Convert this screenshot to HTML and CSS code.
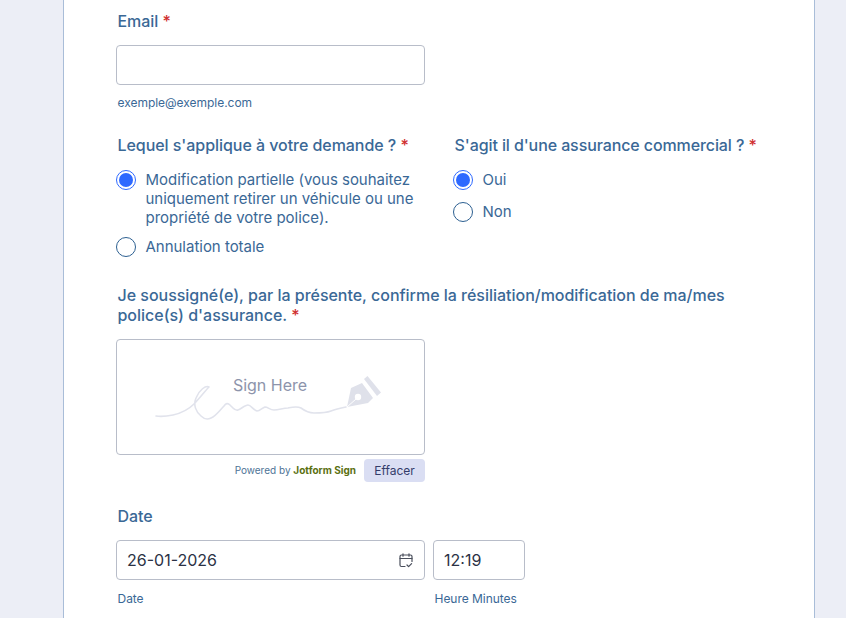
FILE: index.html
```html
<!DOCTYPE html>
<html lang="fr">
<head>
<meta charset="utf-8">
<title>Formulaire</title>
<link rel="stylesheet" href="styles.css">
</head>
<body>
<main class="card">
  <section class="field email">
    <div class="label">Email <span class="req">*</span></div>
    <div class="input wide"></div>
    <div class="sub">exemple@exemple.com</div>
  </section>
  <section class="columns">
    <div class="col col-left">
      <div class="label">Lequel s'applique à votre demande ? <span class="req">*</span></div>
      <div class="radio-list">
        <div class="radio-row">
          <span class="radio on"></span>
          <span class="radio-text">Modification partielle (vous souhaitez uniquement retirer un véhicule ou une propriété de votre police).</span>
        </div>
        <div class="radio-row">
          <span class="radio"></span>
          <span class="radio-text">Annulation totale</span>
        </div>
      </div>
    </div>
    <div class="col col-right">
      <div class="label narrow">S'agit il d'une assurance commercial ? <span class="req">*</span></div>
      <div class="radio-list tight">
        <div class="radio-row">
          <span class="radio on"></span>
          <span class="radio-text">Oui</span>
        </div>
        <div class="radio-row">
          <span class="radio"></span>
          <span class="radio-text">Non</span>
        </div>
      </div>
    </div>
  </section>
  <section class="field sign">
    <div class="label long">Je soussigné(e), par la présente, confirme la résiliation/modification de ma/mes police(s) d'assurance. <span class="req">*</span></div>
    <div class="sign-box">
      <span class="sign-here">Sign Here</span>
      <svg class="sign-art" width="235" height="55" viewBox="150 370 235 55" fill="none">
        <path d="M156 416 C163 417 168 416 173 415 C182 413 188 410 194 404 C200 398 205 391 209 387 C206 385 199 390 196 398 C193 405 196 412 201 416 C204 419 207 420 211 418 C216 416 220 410 224 406 C226 403 228 403 230 405 C233 408 235 411 238 410 C241 409 245 405 248 405 C251 405 253 410 257 411 C260 411 262 408 265 407 C268 407 270 410 274 410 C279 410 283 408 288 408 C293 407 297 406 301 408 C305 411 309 413 314 413 C320 413 326 413 331 411 C336 409 341 408 346 407" stroke="#e1e3ec" stroke-width="1.6" stroke-linecap="round" stroke-linejoin="round"/>
        <path d="M347 407 L351 388 L362 383 L373 398 L368 403 Z" fill="#dfe1ea"/>
        <path d="M364 379 L367.5 376 L381 392.5 L377 396 Z" fill="#dfe1ea"/>
        <circle cx="358" cy="397" r="3.2" fill="#fff"/>
        <path d="M347 407 L356 399" stroke="#fff" stroke-width="1"/>
      </svg>
    </div>
    <div class="sign-foot">
      <span class="powered">Powered by <b class="brand">Jotform Sign</b></span>
      <button class="clear" type="button">Effacer</button>
    </div>
  </section>
  <section class="field date">
    <div class="label">Date</div>
    <div class="date-row">
      <div class="date-col">
        <div class="input wide value">
          <span>26-01-2026</span>
          <svg class="cal" width="14" height="15" viewBox="0 0 14 15" fill="none" stroke="#4a4f5c" stroke-width="1.2" stroke-linecap="round" stroke-linejoin="round">
            <path d="M6 13.5H2.5A1.5 1.5 0 0 1 1 12V3.5A1.5 1.5 0 0 1 2.5 2h9A1.5 1.5 0 0 1 13 3.5V8.5"/>
            <path d="M1 5.5h12M4 .8v2.4M10 .8v2.4"/>
            <path d="M8 12l1.6 1.6 3-3"/>
          </svg>
        </div>
        <div class="sub date-sub">Date</div>
      </div>
      <div class="time-col">
        <div class="input time value"><span>12:19</span></div>
        <div class="sub date-sub">Heure Minutes</div>
      </div>
    </div>
  </section>
</main>
</body>
</html>
```
FILE: styles.css
```css
* { box-sizing: border-box; }
html, body { margin: 0; height: 618px; overflow: hidden; }
body {
  background: #eceef6;
  font-family: Inter, "Liberation Sans", sans-serif;
  color: #3a6896;
}
.card {
  width: 752px;
  height: 618px;
  margin-left: 63px;
  background: #fff;
  border-left: 1px solid #a9bdd8;
  border-right: 1px solid #a9bdd8;
  padding: 11px 0 0 52px;
}
.label {
  font-size: 16px;
  letter-spacing: -0.05px;
  font-weight: 500;
  line-height: 20px;
  margin-left: 1.5px;
}
.label.narrow { letter-spacing: -0.1px; }
.label.long { width: 640px; letter-spacing: -0.02px; }
.req { color: #cf2e2e; }
.input {
  border: 1px solid #b8bdc9;
  border-radius: 4px;
  background: #fff;
  height: 40px;
}
.wide { width: 309px; }
.email .input { margin-top: 14px; }
.sub {
  font-size: 12px;
  letter-spacing: -0.03px;
  line-height: 16px;
  margin: 10px 0 0 1.5px;
}
.date-sub { margin-top: 11px; }
.columns { display: flex; margin-top: 24px; }
.col-left { width: 337px; }
.col-right { flex: 1; }
.radio-list { display: flex; flex-direction: column; gap: 10px; margin-top: 15px; }
.radio-list.tight { gap: 12px; }
.radio-row { display: flex; gap: 9.5px; }
.radio {
  flex: none;
  width: 20px;
  height: 20px;
  border: 1.3px solid #2c5f91;
  border-radius: 50%;
  background: #fff;
  position: relative;
}
.radio.on { border-color: #2e69ff; }
.radio.on::after {
  content: "";
  position: absolute;
  inset: 2px;
  border-radius: 50%;
  background: #2e69ff;
}
.radio-text { font-size: 15px; letter-spacing: -0.02px; line-height: 19px; width: 280px; }
.sign { margin-top: 28px; }
.sign-box {
  position: relative;
  width: 309px;
  height: 116px;
  margin-top: 14px;
  border: 1px solid #b8bdc9;
  border-radius: 4px;
  display: flex;
  justify-content: center;
}
.sign-here {
  font-size: 16px;
  line-height: 20px;
  margin-top: 35px;
  margin-left: -1px;
  color: #8d94ab;
}
.sign-art { position: absolute; left: 33px; top: 30px; }
.sign-foot {
  width: 309px;
  display: flex;
  justify-content: flex-end;
  align-items: center;
  gap: 8px;
  margin-top: 4px;
}
.powered { font-size: 10px; color: #4e7396; padding-bottom: 2px; }
.brand { font-weight: 700; color: #5b7012; }
.clear {
  width: 61px;
  height: 23px;
  padding: 0;
  border: 0;
  border-radius: 4px;
  background: #dadef3;
  color: #343c6a;
  font: 400 12px Inter, "Liberation Sans", sans-serif;
}
.date { margin-top: 24px; }
.date-row { display: flex; gap: 8px; margin-top: 14px; }
.value {
  display: flex;
  align-items: center;
  justify-content: space-between;
  padding: 0 11px 0 10px;
  font-size: 16px;
  color: #2b3245;
}
.time { width: 92px; }
```
